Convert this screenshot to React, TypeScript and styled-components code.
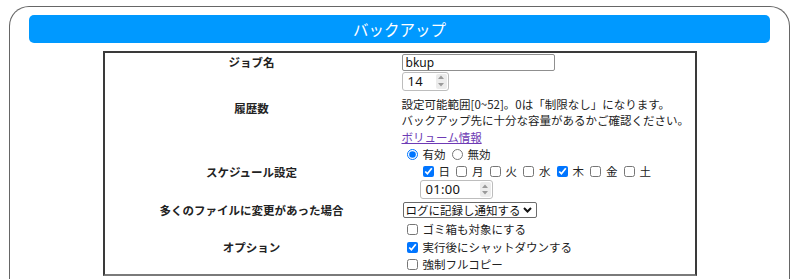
import React from 'react';
import styled, { createGlobalStyle } from 'styled-components';

const GlobalStyle = createGlobalStyle`
  html, body {
    margin: 0;
    overflow: hidden;
    background: #fff;
  }
  body {
    font-family: "Noto Sans CJK JP", "Noto Sans", sans-serif;
    color: #222;
  }
`;

const Frame = styled.div`
  margin: 6px 10px 0 9px;
  height: 300px;
  border: 1.5px solid #666;
  border-bottom: none;
  border-radius: 20px 20px 0 0;
  padding: 7.5px 19px 0;
`;

const Banner = styled.h2`
  margin: 0;
  height: 28px;
  background: #0099ff;
  border-radius: 5px;
  color: #fff;
  font-size: 15.5px;
  font-weight: normal;
  display: flex;
  align-items: center;
  justify-content: center;
`;

const FormTable = styled.div`
  width: 594px;
  box-sizing: border-box;
  margin: 8px auto 0;
  border: 2px solid #3a3a3a;
  border-bottom-color: #7a7a7a;
  display: grid;
  grid-template-columns: 294px 1fr;
  font-size: 11.5px;
  line-height: 16.5px;
`;

const Label = styled.div`
  display: flex;
  align-items: center;
  justify-content: center;
  font-weight: bold;
`;

const Value = styled.div<{ $pad?: string }>`
  padding: ${(p) => p.$pad || '0'};
  padding-left: 3px;
  display: flex;
  flex-direction: column;
  align-items: flex-start;
`;

const TextInput = styled.input`
  width: 153px;
  height: 17px;
  box-sizing: border-box;
  margin: 0;
  padding: 0 3px;
  border: 1px solid #8f8f8f;
  border-radius: 2px;
  font-family: "Noto Sans", sans-serif;
  font-size: 12px;
  color: #111;
  outline: none;
`;

const Spin = styled.div<{ $w: number; $indent?: number }>`
  width: ${(p) => p.$w}px;
  height: 19px;
  box-sizing: border-box;
  margin-left: ${(p) => p.$indent || 0}px;
  border: 1px solid #bdbdbd;
  border-radius: 3px;
  display: flex;
  align-items: center;
  justify-content: space-between;
  padding: 0 1px 0 5px;
  font-family: "Noto Sans", sans-serif;
  font-size: 13px;
  line-height: 17px;
  color: #111;
  letter-spacing: 0.3px;
`;

const SpinButtons = styled.div`
  width: 11px;
  height: 15px;
  border-radius: 2px;
  background: #ececec;
  display: flex;
  flex-direction: column;
  align-items: center;
  justify-content: space-around;
`;

const Notes = styled.div`
  margin-top: 5px;
`;

const Link = styled.a`
  color: #6e3bb5;
  text-decoration: underline;
`;

const Line = styled.div<{ $indent?: number; $h?: number }>`
  height: ${(p) => p.$h || 17}px;
  line-height: ${(p) => p.$h || 17}px;
  padding-left: ${(p) => p.$indent || 0}px;
  display: flex;
  align-items: center;
`;

const Choice = styled.label<{ $gap?: number }>`
  display: inline-flex;
  align-items: center;
  gap: ${(p) => p.$gap || 5}px;
  margin-right: 6px;
`;

const Box = styled.input`
  width: 11px;
  height: 11px;
  margin: 0;
`;

const Select = styled.div`
  width: 134px;
  height: 16px;
  box-sizing: border-box;
  margin-left: 1px;
  border: 1px solid #6b6b6b;
  border-radius: 2px;
  display: flex;
  align-items: center;
  justify-content: space-between;
  padding: 0 4px 0 2px;
  font-size: 11.5px;
  line-height: 14px;
  color: #111;
`;

const SpinArrows = () => (
  <SpinButtons>
    <svg width="6" height="4" viewBox="0 0 6 4">
      <path d="M0 4 L3 0.5 L6 4 Z" fill="#9a9a9a" />
    </svg>
    <svg width="6" height="4" viewBox="0 0 6 4">
      <path d="M0 0 L3 3.5 L6 0 Z" fill="#9a9a9a" />
    </svg>
  </SpinButtons>
);

const days = [
  { d: '日', on: true },
  { d: '月', on: false },
  { d: '火', on: false },
  { d: '水', on: false },
  { d: '木', on: true },
  { d: '金', on: false },
  { d: '土', on: false },
];

const options = [
  { t: 'ゴミ箱も対象にする', on: false },
  { t: '実行後にシャットダウンする', on: true },
  { t: '強制フルコピー', on: false },
];

const App = () => (
  <>
    <GlobalStyle />
    <Frame>
      <Banner>バックアップ</Banner>
      <FormTable>
        <Label>ジョブ名</Label>
        <Value $pad="1px 0">
          <TextInput defaultValue="bkup" />
        </Value>

        <Label>履歴数</Label>
        <Value>
          <Spin $w={47}>
            14
            <SpinArrows />
          </Spin>
          <Notes>
            設定可能範囲[0~52]。0は「制限なし」になります。
            <br />
            バックアップ先に十分な容量があるかご確認ください。
            <br />
            <Link href="#">ボリューム情報</Link>
          </Notes>
        </Value>

        <Label>スケジュール設定</Label>
        <Value $pad="1px 0 1px">
          <Line $indent={5}>
            <Choice>
              <Box type="radio" name="sch" defaultChecked />
              有効
            </Choice>
            <Choice>
              <Box type="radio" name="sch" />
              無効
            </Choice>
          </Line>
          <Line $indent={21}>
            {days.map(({ d, on }) => (
              <Choice key={d} $gap={5}>
                <Box type="checkbox" defaultChecked={on} />
                {d}
              </Choice>
            ))}
          </Line>
          <Spin $w={73} $indent={18}>
            01:00
            <SpinArrows />
          </Spin>
        </Value>

        <Label>多くのファイルに変更があった場合</Label>
        <Value $pad="2px 0">
          <Select>
            ログに記録し通知する
            <svg width="9" height="6" viewBox="0 0 9 6">
              <path d="M1 1 L4.5 4.5 L8 1" fill="none" stroke="#111" strokeWidth="2" />
            </svg>
          </Select>
        </Value>

        <Label>オプション</Label>
        <Value $pad="1px 0 0">
          {options.map(({ t, on }) => (
            <Line key={t} $indent={5} $h={17.5}>
              <Choice $gap={5}>
                <Box type="checkbox" defaultChecked={on} />
                {t}
              </Choice>
            </Line>
          ))}
        </Value>
      </FormTable>
    </Frame>
  </>
);

export default App;
